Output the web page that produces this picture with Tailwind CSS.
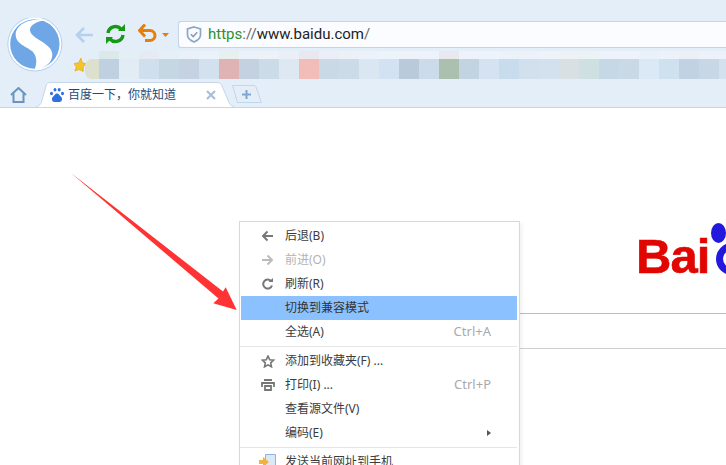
<!DOCTYPE html>
<html lang="zh-CN">
<head>
    <meta charset="UTF-8" />
    <title>百度一下，你就知道</title>
    <script src="https://cdn.jsdelivr.net/npm/@tailwindcss/browser@4"></script>
</head>
<body class="w-[726px] h-[465px] overflow-hidden bg-white font-['Noto_Sans','Noto_Sans_CJK_SC',sans-serif]">

<!-- browser chrome -->
<header class="h-[108px] bg-[#e4eef8] flex flex-col">
    <div class="h-px bg-[#9a9a94]"></div>
    <div class="flex h-[79px]">
        <!-- logo -->
        <div class="w-[72px] pl-[7px] pt-[18px] shrink-0">
            <svg width="56" height="56" viewBox="21 27 168 168">
                <circle cx="104.5" cy="105" r="81" fill="#ffffff" stroke="#b4d0ee" stroke-width="3"/>
                <circle cx="104.5" cy="105" r="74" fill="#6fa6e6"/>
                <path d="M135 33C100 26 50 40 47 75C46 105 80 112 97 127C110 140 112 160 104 181C135 180 158 160 157 135C155 100 90 90 90 62C90 48 110 38 135 33Z" fill="#fff"/>
            </svg>
        </div>
        <div class="flex-1 min-w-0 flex flex-col">
            <!-- nav + address -->
            <div class="flex items-start pt-[21px] h-[51px]">
                <svg class="ml-[3px] mt-[6px]" width="18" height="16" viewBox="0 0 18 16" fill="none" stroke="#b5d0ec" stroke-width="2.6">
                    <path d="M18 8H2M9 1L2 8L9 15"/>
                </svg>
                <svg class="ml-[12px] mt-[3px]" width="21" height="20" viewBox="0 0 21 20" fill="none" stroke="#149a14" stroke-width="3.4">
                    <path d="M3 9A7.5 7.5 0 0 1 16 5"/>
                    <path d="M18 11A7.5 7.5 0 0 1 5 15"/>
                    <path d="M13 7H20V0Z" fill="#149a14" stroke="none"/>
                    <path d="M8 13H1V20Z" fill="#149a14" stroke="none"/>
                </svg>
                <svg class="ml-[12px] mt-[3px]" width="19" height="19" viewBox="0 0 19 19" fill="none" stroke="#e67e0b" stroke-width="3">
                    <path d="M1.5 6.5H12A5 5 0 0 1 12 16.5H7"/>
                    <path d="M7 0.5L1.5 6.5L7 12.5"/>
                </svg>
                <svg class="ml-[5px] mt-[12px]" width="7" height="4" viewBox="0 0 7 4"><path d="M0 0H7L3.5 4Z" fill="#e67e0b"/></svg>
                <!-- address bar -->
                <div class="ml-[9px] flex-1 h-[27px] bg-[#fbfcff] border border-r-0 border-[#c3d5e6] rounded-l-[3px] flex items-center text-[15px] text-[#222] font-['Roboto',sans-serif]">
                    <svg class="ml-[7px]" width="16" height="17" viewBox="0 0 16 17" fill="none">
                        <path d="M8 1L14.5 3V9C14.5 12 11.5 14.5 8 16C4.500 14.500 1.500 12 1.500 9V3Z" stroke="#8aa7c8" stroke-width="1.700"/>
                        <path d="M4.800 8.200L7.200 10.600L11.200 6.200" stroke="#8a9aad" stroke-width="1.500"/>
                    </svg>
                    <span class="ml-[6px]"><span class="text-[#2d8f2d]">https</span><span class="text-[#666]">://</span>www.baidu.com<span class="text-[#666]">/</span></span>
                </div>
            </div>
            <!-- bookmarks, blurred -->
            <div class="flex h-[28px]">
                <div class="w-[13px] shrink-0 pt-[7px]">
                    <svg class="ml-[2px]" width="12" height="14" viewBox="0 0 13 15"><path d="M7.500 0L9 5L13 6L10 9.500L10 14.500L5.500 12.500L1 14L2.500 9.500L0 6L5 5Z" fill="#f5c52a" stroke="#dba31b" stroke-width=".7"/></svg>
                </div>
                <div class="flex-1 min-w-0 overflow-hidden grid grid-cols-[14px_repeat(32,20px)] grid-rows-[8px_20px]">
                    <div></div>
                    <div class="bg-[#dce9ea]"></div><div class="bg-[#e3eff4]"></div><div class="bg-[#e6eaf2]"></div><div class="bg-[#e5eff8]"></div><div class="bg-[#e9f0f7]"></div><div class="bg-[#eaf2fa]"></div><div class="bg-[#e8efef]"></div><div class="bg-[#ebf2f9]"></div><div class="bg-[#edf2f9]"></div><div class="bg-[#eaeef6]"></div><div class="bg-[#e8e8ee]"></div><div class="bg-[#ebeef6]"></div><div class="bg-[#ecf0f7]"></div><div class="bg-[#edf2fa]"></div><div class="bg-[#edf3fb]"></div><div class="bg-[#eef3fb]"></div><div class="bg-[#eef3fb]"></div><div class="bg-[#e9e8ee]"></div><div class="bg-[#edf2fb]"></div><div class="bg-[#edf3fb]"></div><div class="bg-[#ebf2fa]"></div><div class="bg-[#edf2fa]"></div><div class="bg-[#eef3fa]"></div><div class="bg-[#edf2f4]"></div><div class="bg-[#ebf3f4]"></div><div class="bg-[#eef2fa]"></div><div class="bg-[#eef2fa]"></div><div class="bg-[#e9f2fa]"></div><div class="bg-[#edf2fa]"></div><div class="bg-[#eceff8]"></div><div class="bg-[#edf1f9]"></div><div class="bg-[#edf2fa]"></div>
                    <div class="bg-[#dde0cc] rounded-l-[7px]"></div>
                    <div class="bg-[#bfd0e0]"></div><div class="bg-[#e2ecf5]"></div><div class="bg-[#cfdfee]"></div><div class="bg-[#c6d7e4]"></div><div class="bg-[#c4d2e1]"></div><div class="bg-[#d3e1ee]"></div><div class="bg-[#dfb3b3]"></div><div class="bg-[#c3d1e1]"></div><div class="bg-[#cbdbe7]"></div><div class="bg-[#dde8f3]"></div><div class="bg-[#f2bcb9]"></div><div class="bg-[#c9d9e6]"></div><div class="bg-[#ccdbe8]"></div><div class="bg-[#dae7f2]"></div><div class="bg-[#d2e2f2]"></div><div class="bg-[#b9cbdb]"></div><div class="bg-[#cbdbea]"></div><div class="bg-[#abc0ae]"></div><div class="bg-[#c2d3e2]"></div><div class="bg-[#d4e2f1]"></div><div class="bg-[#c9dcee]"></div><div class="bg-[#d2e0ed]"></div><div class="bg-[#d3e1ee]"></div><div class="bg-[#d9e0e4]"></div><div class="bg-[#cee0e2]"></div><div class="bg-[#c6d7e6]"></div><div class="bg-[#cad9e6]"></div><div class="bg-[#dbe9f7]"></div><div class="bg-[#cfe0ef]"></div><div class="bg-[#c1d3e2]"></div><div class="bg-[#c8d7e5]"></div><div class="bg-[#d3e1ef]"></div>
                </div>
            </div>
        </div>
    </div>
    <!-- tabs -->
    <div class="flex-1 flex border-b border-[#c5d6e6] pl-[10px]">
        <svg class="mt-[8px]" width="17" height="16" viewBox="0 0 17 16" fill="none" stroke="#6a94bf" stroke-width="2">
            <path d="M1 8L8.500 1L16 8M3.500 6.500V15H13.500V6.500"/>
        </svg>
        <div class="relative ml-[9px] w-[198px] h-[25px] mt-[3px] flex items-center text-[12px] text-[#1e4a78]">
            <svg class="absolute inset-0" width="198" height="25" viewBox="0 0 198 25">
                <path d="M0 25C4 24 5 22 6 18L10 4C10.500 1.500 12 .500 15 .500H181C184 .500 185 1.500 186 4L192 18C193 22 195 24 198 25Z" fill="#fff"/>
                <path d="M0 24.500C4 24 5 22 6 18L10 4C10.500 1.500 12 .500 15 .500H181C184 .500 185 1.500 186 4L192 18C193 22 195 24 198 24.500" fill="none" stroke="#c5d6e6"/>
            </svg>
            <svg class="relative ml-[14px] mt-[1px]" width="14" height="14" viewBox="0 0 14 14" fill="#2f6fe0">
                <ellipse cx="5" cy="1.800" rx="1.500" ry="1.800"/><ellipse cx="9.200" cy="1.800" rx="1.500" ry="1.800"/>
                <ellipse cx="1.500" cy="5.500" rx="1.500" ry="1.800"/><ellipse cx="12.500" cy="5.500" rx="1.500" ry="1.800"/>
                <path d="M7 5.500C9 5.500 9.500 7.500 11 8.800C13 10.500 12 14 9.500 14H4.500C2 14 1 10.500 3 8.800C4.500 7.500 5 5.500 7 5.500Z"/>
            </svg>
            <span class="relative ml-[4px]">百度一下，你就知道</span>
            <svg class="relative ml-[30px]" width="10" height="10" viewBox="0 0 10 10" stroke="#a9bfdc" stroke-width="2.200"><path d="M1 1L9 9M9 1L1 9"/></svg>
        </div>
        <div class="relative w-[31px] h-[18px] mt-[6px] -ml-[3px] flex items-center justify-center">
            <svg class="absolute inset-0" width="31" height="18" viewBox="0 0 31 18" fill="none">
                <path d="M1.500 .500H23C24 .500 24.500 1 25 2L30.500 17.500H6.500Z" stroke="#c3d5e8"/>
            </svg>
            <svg class="relative" width="9" height="9" viewBox="0 0 9 9" stroke="#7fa6cf" stroke-width="2"><path d="M4.500 0V9M0 4.500H9"/></svg>
        </div>
    </div>
</header>

<!-- page -->
<main class="relative h-[357px] flex flex-col items-end">
    <div class="mt-[114px] h-[91px] w-[90px] flex items-start">
        <span class="mt-[10px] w-[73px] shrink-0 whitespace-nowrap font-['Liberation_Sans',sans-serif] font-bold text-[49px] leading-[49px] tracking-[-1px] text-[#e10601] [-webkit-text-stroke:0.600px_#e10601]">Bai</span>
        <svg class="shrink-0" width="17" height="55" viewBox="0 0 17 55" fill="#2319dc">
            <ellipse cx="9.500" cy="11" rx="7.500" ry="10"/>
            <circle cx="23" cy="37" r="12.500" fill="none" stroke="#2319dc" stroke-width="7"/>
        </svg>
    </div>
    <div class="w-[426px] h-[36px] border-t border-b border-t-[#bbbbbb] border-b-[#cfcfcf]"></div>

    <!-- red annotation arrow -->
    <svg class="absolute left-[60px] top-[57px]" width="190" height="160" viewBox="60 165 190 160">
        <path d="M71 173L223 291.500L225.700 287.300L236.700 310L213.300 303.300L218.500 298.500Z" fill="#ff3333"/>
    </svg>

    <!-- context menu -->
    <div class="absolute left-[239px] top-[113px] w-[281px] h-[260px] bg-white border border-[#d8d8d8] shadow-[2px_2px_4px_rgba(0,0,0,0.06)] pt-[2px] pl-px pr-[2px] text-[12px] text-[#3c3c3c]">
        <div class="flex items-center h-6">
            <svg class="ml-[20px] w-[24px]" width="24" height="12" viewBox="0 0 24 12" fill="none" stroke="#777" stroke-width="2"><path d="M12 6H2M6.500 1.500L2 6L6.500 10.500"/></svg>
            <span>后退(B)</span>
        </div>
        <div class="flex items-center h-6 text-[#b3b3b3]">
            <svg class="ml-[20px] w-[24px]" width="24" height="12" viewBox="0 0 24 12" fill="none" stroke="#bbb" stroke-width="2"><path d="M1 6H11M6.500 1.500L11 6L6.500 10.500"/></svg>
            <span>前进(O)</span>
        </div>
        <div class="flex items-center h-6">
            <svg class="ml-[20px] w-[24px]" width="24" height="12" viewBox="0 0 24 12" fill="none" stroke="#777" stroke-width="2"><path d="M10 3A4.500 4.500 0 1 0 11 7.500"/><path d="M7.500 4H12V0Z" fill="#777" stroke="none"/></svg>
            <span>刷新(R)</span>
        </div>
        <div class="flex items-center h-6 bg-[#8cc1ff] pl-[44px] text-[#333]">切换到兼容模式</div>
        <div class="flex items-center h-6 pl-[44px] pr-[26px] justify-between">
            <span>全选(A)</span><span class="text-[13px] text-[#aaa]">Ctrl+A</span>
        </div>
        <div class="h-px bg-[#e6e6e6] my-[2px] -ml-px"></div>
        <div class="flex items-center h-6">
            <svg class="ml-[20px] w-[24px]" width="24" height="13" viewBox="0 0 24 13" fill="none" stroke="#777" stroke-width="1.600"><path d="M7 1L8.700 4.700L12.600 5.100L9.700 7.800L10.500 11.800L7 9.800L3.500 11.800L4.300 7.800L1.400 5.100L5.300 4.700Z"/></svg>
            <span>添加到收藏夹(F) ...</span>
        </div>
        <div class="flex items-center h-6 pr-[26px]">
            <svg class="ml-[20px] w-[24px]" width="24" height="12" viewBox="0 0 24 12" fill="none" stroke="#777" stroke-width="1.800"><path d="M3 1H11M1 8V4H13V8M4 7H10V11H4Z"/></svg>
            <span>打印(I) ...</span><span class="ml-auto text-[13px] text-[#aaa]">Ctrl+P</span>
        </div>
        <div class="flex items-center h-6 pl-[44px]">查看源文件(V)</div>
        <div class="flex items-center h-6 pl-[44px] pr-[26px] justify-between">
            <span>编码(E)</span>
            <svg width="4" height="6" viewBox="0 0 4 6"><path d="M0 0L4 3L0 6Z" fill="#555"/></svg>
        </div>
        <div class="h-px bg-[#e6e6e6] my-[2px] -ml-px"></div>
        <div class="flex items-center h-6">
            <svg class="ml-[18px] w-[26px]" width="26" height="16" viewBox="0 0 26 16">
                <path d="M6.500 .500H16.500V16H6.500Z" fill="#dbe8f7" stroke="#8fb2dc"/>
                <path d="M0 6H4V3L10 8L4 13V10H0Z" fill="#f2b33d"/>
            </svg>
            <span>发送当前网址到手机</span>
        </div>
    </div>
</main>
</body>
</html>
